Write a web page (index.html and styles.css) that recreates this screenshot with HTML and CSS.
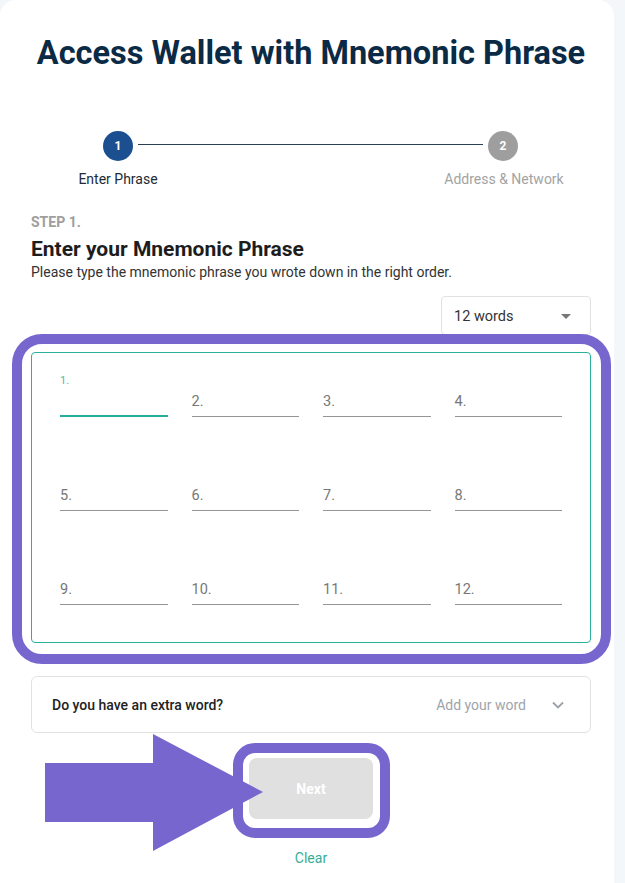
FILE: index.html
```html
<!DOCTYPE html>
<html lang="en">
<head>
<meta charset="utf-8">
<title>Access Wallet with Mnemonic Phrase</title>
<link rel="stylesheet" href="styles.css">
</head>
<body>
<div class="card">
  <h1 class="title">Access Wallet with Mnemonic Phrase</h1>

  <div class="stepper">
    <div class="stepper-track">
      <span class="dot dot-active">1</span>
      <span class="track-line"></span>
      <span class="dot">2</span>
    </div>
    <div class="stepper-labels">
      <span class="step-label step-label-active">Enter Phrase</span>
      <span class="step-label">Address &amp; Network</span>
    </div>
  </div>

  <div class="step-tag">STEP 1.</div>
  <h2 class="step-title">Enter your Mnemonic Phrase</h2>
  <p class="step-desc">Please type the mnemonic phrase you wrote down in the right order.</p>

  <div class="select-row">
    <div class="select">
      <span class="select-value">12 words</span>
      <svg class="select-caret" width="10" height="5" viewBox="0 0 10 5"><polygon points="0,0 10,0 5,5" fill="#777"/></svg>
    </div>
  </div>

  <div class="phrase-box">
    <div class="phrase-grid">
      <div class="field field-focused"><span class="field-float">1.</span><span class="field-line"></span></div>
      <div class="field"><span class="field-float"></span><span class="field-line">2.</span></div>
      <div class="field"><span class="field-float"></span><span class="field-line">3.</span></div>
      <div class="field"><span class="field-float"></span><span class="field-line">4.</span></div>
      <div class="field"><span class="field-float"></span><span class="field-line">5.</span></div>
      <div class="field"><span class="field-float"></span><span class="field-line">6.</span></div>
      <div class="field"><span class="field-float"></span><span class="field-line">7.</span></div>
      <div class="field"><span class="field-float"></span><span class="field-line">8.</span></div>
      <div class="field"><span class="field-float"></span><span class="field-line">9.</span></div>
      <div class="field"><span class="field-float"></span><span class="field-line">10.</span></div>
      <div class="field"><span class="field-float"></span><span class="field-line">11.</span></div>
      <div class="field"><span class="field-float"></span><span class="field-line">12.</span></div>
    </div>
  </div>

  <div class="extra">
    <span class="extra-q">Do you have an extra word?</span>
    <span class="extra-add">Add your word</span>
    <svg class="extra-chevron" width="12" height="8" viewBox="0 0 12 8"><polyline points="1,1.5 6,6.5 11,1.5" fill="none" stroke="#9aa1ab" stroke-width="1.8"/></svg>
  </div>

  <div class="actions">
    <div class="next-wrap"><button class="next-btn" type="button">Next</button></div>
    <a class="clear-link">Clear</a>
    <svg class="arrow" width="218" height="117" viewBox="0 0 218 117"><polygon points="0,29 108,29 108,0 218,58 108,117 108,88 0,88" fill="#7866cf"/></svg>
  </div>
</div>
</body>
</html>
```

FILE: styles.css
```css
* { box-sizing: border-box; }

body {
  margin: 0;
  background: #f4f7f9;
  font-family: Roboto, "Liberation Sans", Arial, sans-serif;
  color: #1f1f1f;
}

.card {
  width: 614px;
  min-height: 883px;
  background: #ffffff;
  border-radius: 16px 16px 0 0;
  padding: 34px 23px 0 31px;
}

.title {
  margin: 0;
  font-size: 32.5px;
  line-height: 38px;
  font-weight: 700;
  color: #0b2a45;
  text-align: center;
}

/* stepper */
.stepper { margin-top: 59px; }

.stepper-track {
  display: flex;
  align-items: center;
  padding: 0 73px 0 72px;
  height: 30px;
}

.dot {
  width: 30px;
  height: 30px;
  border-radius: 50%;
  background: #9e9e9e;
  color: #fff;
  font-size: 12px;
  font-weight: 700;
  display: flex;
  align-items: center;
  justify-content: center;
  flex: none;
}

.dot-active { background: #1c4f90; }

.track-line {
  flex: 1;
  height: 1px;
  background: #2b3e52;
  margin: -3px 5px 0;
}

.stepper-labels {
  display: flex;
  justify-content: space-between;
  margin-top: 8px;
}

.step-label {
  width: 174px;
  text-align: center;
  font-size: 14px;
  line-height: 20px;
  color: #a3a3a3;
}

.step-label-active { color: #222b36; }

/* step header */
.step-tag {
  margin-top: 24px;
  font-size: 14px;
  line-height: 18px;
  font-weight: 700;
  color: #9e9e9e;
}

.step-title {
  margin: 5px 0 0;
  font-size: 21px;
  line-height: 26px;
  font-weight: 700;
  color: #1d1d1d;
}

.step-desc {
  margin: 0;
  font-size: 14px;
  line-height: 20px;
  color: #333;
}

/* select */
.select-row {
  display: flex;
  justify-content: flex-end;
  margin-top: 14px;
}

.select {
  width: 150px;
  height: 39px;
  border: 1px solid #e2e2e2;
  border-radius: 4px;
  display: flex;
  align-items: center;
  justify-content: space-between;
  padding: 1px 19px 0 12px;
}

.select-value {
  font-size: 14.5px;
  color: #333;
}

/* phrase grid */
.phrase-box {
  position: relative;
  margin-top: 17px;
  height: 291px;
  border: 1px solid #2bb09c;
  border-radius: 4px;
  padding: 21px 28px 0 28px;
}

.phrase-box::before {
  content: "";
  position: absolute;
  top: -19px;
  left: -20px;
  right: -21px;
  bottom: -22px;
  border: 10px solid #7866cf;
  border-radius: 30px;
  pointer-events: none;
}

.phrase-grid {
  display: grid;
  grid-template-columns: repeat(4, 1fr);
  column-gap: 24px;
  row-gap: 51px;
}

.field {
  display: flex;
  flex-direction: column;
  border-bottom: 1px solid #959595;
  padding-bottom: 4px;
}

.field-float {
  height: 16px;
  font-size: 11px;
  line-height: 14px;
  color: #4dbca8;
}

.field-line {
  height: 22px;
  padding-top: 2px;
  font-size: 14.5px;
  line-height: 20px;
  color: #777;
}

.field-focused {
  border-bottom: 2px solid #26ae9a;
  padding-bottom: 3px;
}

/* extra word */
.extra {
  margin-top: 33px;
  height: 57px;
  border: 1px solid #e2e2e2;
  border-radius: 6px;
  display: flex;
  align-items: center;
  padding: 0 26px 0 20px;
}

.extra-q {
  flex: 1;
  font-size: 14px;
  font-weight: 500;
  color: #222;
}

.extra-add {
  font-size: 14px;
  color: #9ea4ad;
  margin-right: 26px;
}

/* actions */
.actions {
  position: relative;
  margin-top: 25px;
  display: flex;
  flex-direction: column;
  align-items: center;
}

.next-wrap {
  position: relative;
  width: 124px;
  height: 61px;
}

.next-wrap::before {
  content: "";
  position: absolute;
  top: -15px;
  left: -16px;
  right: -17px;
  bottom: -19px;
  border: 10px solid #7866cf;
  border-radius: 22px;
}

.next-btn {
  position: relative;
  width: 100%;
  height: 100%;
  border: none;
  border-radius: 8px;
  background: #e0e0e0;
  color: #fff;
  font-family: inherit;
  font-size: 14px;
  font-weight: 700;
}

.clear-link {
  margin-top: 29px;
  font-size: 14px;
  line-height: 20px;
  color: #36ae97;
}

.arrow {
  position: absolute;
  left: 14px;
  top: -24px;
}
```
